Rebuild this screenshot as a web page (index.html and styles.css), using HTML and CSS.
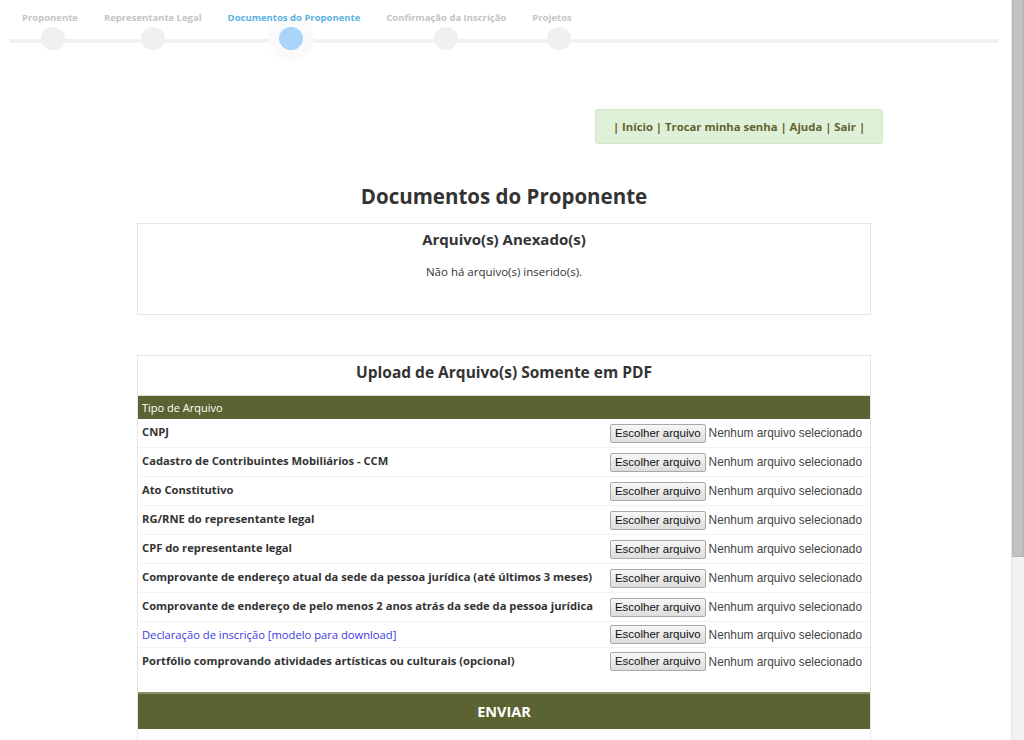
FILE: index.html
```html
<!DOCTYPE html>
<html lang="pt-BR">
<head>
<meta charset="utf-8">
<title>Documentos do Proponente</title>
<link rel="stylesheet" href="styles.css">
</head>
<body>
<div class="stepper">
  <div class="step step-first"><span class="step-label">Proponente</span><span class="dot"></span></div>
  <div class="step"><span class="step-label">Representante Legal</span><span class="dot"></span></div>
  <div class="step active"><span class="step-label">Documentos do Proponente</span><span class="dot"></span></div>
  <div class="step"><span class="step-label">Confirmação da Inscrição</span><span class="dot"></span></div>
  <div class="step step-last"><span class="step-label">Projetos</span><span class="dot"></span></div>
</div>

<div class="nav-wrap">
  <div class="nav-box">| <a href="#">Início</a> | <a href="#">Trocar minha senha</a> | <a href="#">Ajuda</a> | <a href="#">Sair</a> |</div>
</div>

<main class="container">
  <h1 class="page-title">Documentos do Proponente</h1>

  <section class="box box-attached">
    <h2 class="box-title">Arquivo(s) Anexado(s)</h2>
    <p class="empty">Não há arquivo(s) inserido(s).</p>
  </section>

  <section class="box box-upload">
    <h2 class="box-title upload-title">Upload de Arquivo(s) Somente em PDF</h2>
    <div class="table">
      <div class="thead">Tipo de Arquivo</div>
      <div class="row"><span class="label">CNPJ</span><span class="file"><span class="fbtn">Escolher arquivo</span><span class="ftext">Nenhum arquivo selecionado</span></span></div>
      <div class="row"><span class="label">Cadastro de Contribuintes Mobiliários - CCM</span><span class="file"><span class="fbtn">Escolher arquivo</span><span class="ftext">Nenhum arquivo selecionado</span></span></div>
      <div class="row"><span class="label">Ato Constitutivo</span><span class="file"><span class="fbtn">Escolher arquivo</span><span class="ftext">Nenhum arquivo selecionado</span></span></div>
      <div class="row"><span class="label">RG/RNE do representante legal</span><span class="file"><span class="fbtn">Escolher arquivo</span><span class="ftext">Nenhum arquivo selecionado</span></span></div>
      <div class="row"><span class="label">CPF do representante legal</span><span class="file"><span class="fbtn">Escolher arquivo</span><span class="ftext">Nenhum arquivo selecionado</span></span></div>
      <div class="row"><span class="label">Comprovante de endereço atual da sede da pessoa jurídica (até últimos 3 meses)</span><span class="file"><span class="fbtn">Escolher arquivo</span><span class="ftext">Nenhum arquivo selecionado</span></span></div>
      <div class="row"><span class="label">Comprovante de endereço de pelo menos 2 anos atrás da sede da pessoa jurídica</span><span class="file"><span class="fbtn">Escolher arquivo</span><span class="ftext">Nenhum arquivo selecionado</span></span></div>
      <div class="row row-link"><a class="label-link" href="#">Declaração de inscrição [modelo para download]</a><span class="file"><span class="fbtn">Escolher arquivo</span><span class="ftext">Nenhum arquivo selecionado</span></span></div>
      <div class="row row-last"><span class="label">Portfólio comprovando atividades artísticas ou culturais (opcional)</span><span class="file"><span class="fbtn">Escolher arquivo</span><span class="ftext">Nenhum arquivo selecionado</span></span></div>
    </div>
    <button class="submit" type="button">ENVIAR</button>
    <div class="box-foot"></div>
  </section>
</main>

<div class="scrollbar" aria-hidden="true"><div class="scroll-thumb"></div></div>
</body>
</html>
```
FILE: styles.css
```css
html, body {
  margin: 0;
  padding: 0;
}
body {
  font-family: "Open Sans", "Liberation Sans", sans-serif;
  color: #333;
  background: #fff;
  padding-right: 16px;
  padding-bottom: 40px;
}

/* fake window scrollbar (overlay) */
.scrollbar {
  position: fixed;
  top: 0;
  right: 0;
  bottom: 0;
  width: 12px;
  background: #f1f1f1;
  border-left: 1px solid #e8e8e8;
  z-index: 10;
}
.scroll-thumb {
  height: 557px;
  background: #c1c1c1;
  border: 1px solid #b3b3b3;
  border-top: none;
  box-sizing: border-box;
}

/* stepper */
.stepper {
  position: relative;
  display: flex;
  gap: 26px;
  padding: 11px 0 0 22px;
  height: 50px;
  box-sizing: border-box;
}
.stepper::before {
  content: "";
  position: absolute;
  left: 10px;
  right: 10px;
  top: 39px;
  height: 4px;
  background: #f1f1f1;
}
.step {
  position: relative;
  display: flex;
  flex-direction: column;
  align-items: center;
  gap: 2px;
}
.step-label {
  position: relative;
  z-index: 2;
  font-size: 9.5px;
  font-weight: 700;
  color: #c4c4c4;
  line-height: 14px;
  white-space: nowrap;
}
.dot {
  position: relative;
  z-index: 1;
  width: 24px;
  height: 24px;
  border-radius: 50%;
  background: #f0f0f0;
}
.step-first .dot {
  margin-left: 7px;
}
.step-last .dot {
  margin-left: 14px;
}
.step.active .step-label {
  color: #5cb2e0;
}
.step.active .dot {
  margin-right: 5px;
  background: #a9d5fa;
  box-shadow: 0 0 0 11px #fafafa;
}

/* nav */
.nav-wrap {
  width: 758px;
  margin: 59px auto 0;
  display: flex;
  justify-content: flex-end;
}
.nav-box {
  width: 288px;
  height: 35px;
  box-sizing: border-box;
  background: #dff0d8;
  border: 1px solid #d3e8c6;
  border-radius: 3px;
  font-size: 11.3px;
  font-weight: 700;
  color: #5f632f;
  line-height: 33px;
  text-align: center;
  white-space: pre;
}
.nav-box a {
  color: #5f632f;
  text-decoration: none;
}

/* content */
.container {
  width: 734px;
  margin: 0 auto;
}
.page-title {
  margin: 39px 0 0;
  font-size: 20.5px;
  font-weight: 700;
  text-align: center;
  line-height: 26px;
  color: #333;
}
.box {
  border: 1px solid #e6e6e6;
  box-sizing: border-box;
}
.box-attached {
  margin-top: 14px;
  height: 92px;
  padding-top: 5px;
}
.box-title {
  margin: 0;
  font-size: 15px;
  font-weight: 700;
  text-align: center;
  line-height: 20px;
  color: #333;
}
.empty {
  margin: 15px 0 0;
  font-size: 11.5px;
  text-align: center;
  line-height: 16px;
  color: #333;
}
.box-upload {
  margin-top: 40px;
  padding-top: 6px;
}
.upload-title {
  font-size: 15.5px;
  margin-bottom: 13px;
}
.thead {
  background: #5c6332;
  color: #fff;
  font-size: 11px;
  line-height: 23px;
  height: 23px;
  padding-left: 4px;
  border-top: 1px solid #d9d9d9;
}
.row {
  display: flex;
  justify-content: space-between;
  align-items: center;
  height: 28px;
  padding: 0 8px 0 4px;
  border-bottom: 1px solid #f2f2f2;
}
.row-link {
  height: 25px;
}
.row-last {
  border-bottom: none;
  height: 27px;
}
.label {
  font-size: 11.2px;
  font-weight: 700;
  color: #333;
  margin-top: -3px;
}
.label-link {
  font-size: 11.2px;
  color: #3a3ae0;
  text-decoration: none;
}
.file {
  display: flex;
  align-items: center;
  gap: 3px;
}
.fbtn {
  font-family: "Liberation Sans", Arial, sans-serif;
  font-size: 11.5px;
  color: #111;
  height: 19px;
  line-height: 17px;
  padding: 0 4px;
  box-sizing: border-box;
  border: 1px solid #a9a9a9;
  border-radius: 2px;
  background: linear-gradient(#f7f7f7, #dddddd);
}
.ftext {
  font-family: "Liberation Sans", Arial, sans-serif;
  font-size: 11.85px;
  color: #444;
}
.submit {
  display: block;
  width: 100%;
  margin-top: 17px;
  height: 37px;
  border: none;
  border-top: 2px solid #8a8f6a;
  background: #5c6332;
  color: #fff;
  font-family: "Open Sans", sans-serif;
  font-size: 14.5px;
  font-weight: 700;
  padding: 0;
}
.box-foot {
  height: 220px;
}
```
